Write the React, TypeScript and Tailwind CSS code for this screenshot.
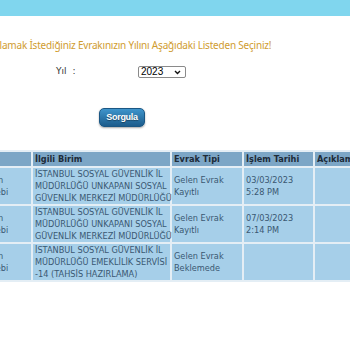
const rows = [
  {
    kaynak: ["Vatandaştan", "Dilekçe Talebi"],
    birim: ["İSTANBUL SOSYAL GÜVENLİK İL", "MÜDÜRLÜĞÜ UNKAPANI SOSYAL", "GÜVENLİK MERKEZİ MÜDÜRLÜĞÜ"],
    tip: ["Gelen Evrak", "Kayıtlı"],
    tarih: ["03/03/2023", "5:28 PM"],
  },
  {
    kaynak: ["Vatandaştan", "Dilekçe Talebi"],
    birim: ["İSTANBUL SOSYAL GÜVENLİK İL", "MÜDÜRLÜĞÜ UNKAPANI SOSYAL", "GÜVENLİK MERKEZİ MÜDÜRLÜĞÜ"],
    tip: ["Gelen Evrak", "Kayıtlı"],
    tarih: ["07/03/2023", "2:14 PM"],
  },
  {
    kaynak: ["Vatandaştan", "Dilekçe Talebi"],
    birim: ["İSTANBUL SOSYAL GÜVENLİK İL", "MÜDÜRLÜĞÜ EMEKLİLİK SERVİSİ", "-14 (TAHSİS HAZIRLAMA)"],
    tip: ["Gelen Evrak", "Beklemede"],
    tarih: [],
  },
];

function Lines({ items }: { items: string[] }) {
  return (
    <>
      {items.map((t, i) => (
        <div key={i}>{t}</div>
      ))}
    </>
  );
}

export default function App() {
  return (
    <div className="w-[350px] h-[350px] overflow-hidden bg-white">
      <div className="h-[16px] bg-[#80d6ee]" />

      <div className="w-[700px] -ml-[228px] flex flex-col items-center">
        <p className="mt-[23px] whitespace-nowrap text-[10px] tracking-[-0.2px] leading-[12px] text-[#d09c30] font-['Noto_Sans',sans-serif]">
          Sorgulamak İstediğiniz Evrakınızın Yılını Aşağıdaki Listeden Seçiniz!
        </p>

        <div className="self-start ml-[284px] mt-[15px] flex items-center h-[12px]">
          <div className="w-[82px] text-[9px] text-[#333] font-['DejaVu_Sans',sans-serif]">
            Yıl<span className="ml-[6px]">:</span>
          </div>
          <div className="w-[48px] h-[12px] border border-[#8a8a8a] rounded-[2px] bg-white flex items-center justify-between pl-[2px] pr-[4px] text-[10px] leading-none text-black font-['Liberation_Sans',sans-serif]">
            <span>2023</span>
            <svg width="7" height="5" viewBox="0 0 7 5" fill="none">
              <path d="M1 1l2.5 2.5L6 1" stroke="#111" strokeWidth="1.4" />
            </svg>
          </div>
        </div>

        <button className="mt-[30px] w-[46px] h-[19px] rounded-[5px] border border-[#1b5784] bg-gradient-to-b from-[#3f95cc] to-[#1c5c8c] shadow-[0_1px_2px_rgba(0,0,0,0.35)] text-white text-[9px] tracking-[-0.3px] font-bold font-['Liberation_Sans',sans-serif] [text-shadow:0_1px_1px_rgba(0,0,0,0.4)]">
          Sorgula
        </button>
      </div>

      <table className="mt-[23px] -ml-[52px] w-[439px] table-fixed border-separate border-spacing-[2px] bg-[#e4eef5] font-['DejaVu_Sans',sans-serif] text-[8.2px] leading-[12px]">
        <colgroup>
          <col className="w-[81px]" />
          <col className="w-[137px]" />
          <col className="w-[70px]" />
          <col className="w-[69px]" />
          <col className="w-[70px]" />
        </colgroup>
        <thead>
          <tr className="bg-[#7ca6c6] text-[#1d2b38] font-bold text-left">
            <th className="h-[14px] px-[2px] leading-[14px] whitespace-nowrap">Gönderen</th>
            <th className="h-[14px] px-[2px] leading-[14px] whitespace-nowrap">İlgili Birim</th>
            <th className="h-[14px] px-[2px] leading-[14px] whitespace-nowrap">Evrak Tipi</th>
            <th className="h-[14px] px-[2px] leading-[14px] whitespace-nowrap">İşlem Tarihi</th>
            <th className="h-[14px] px-[2px] leading-[14px] whitespace-nowrap">Açıklama</th>
          </tr>
        </thead>
        <tbody>
          {rows.map((r, i) => (
            <tr key={i} className="bg-[#a6cfe9] text-[#3a5872] align-middle">
              <td className="px-[2px] whitespace-nowrap">
                <Lines items={r.kaynak} />
              </td>
              <td className="px-[2px] whitespace-nowrap">
                <Lines items={r.birim} />
              </td>
              <td className="px-[2px] whitespace-nowrap">
                <Lines items={r.tip} />
              </td>
              <td className="px-[2px] whitespace-nowrap">
                <Lines items={r.tarih} />
              </td>
              <td className="px-[2px]" />
            </tr>
          ))}
        </tbody>
      </table>
    </div>
  );
}
